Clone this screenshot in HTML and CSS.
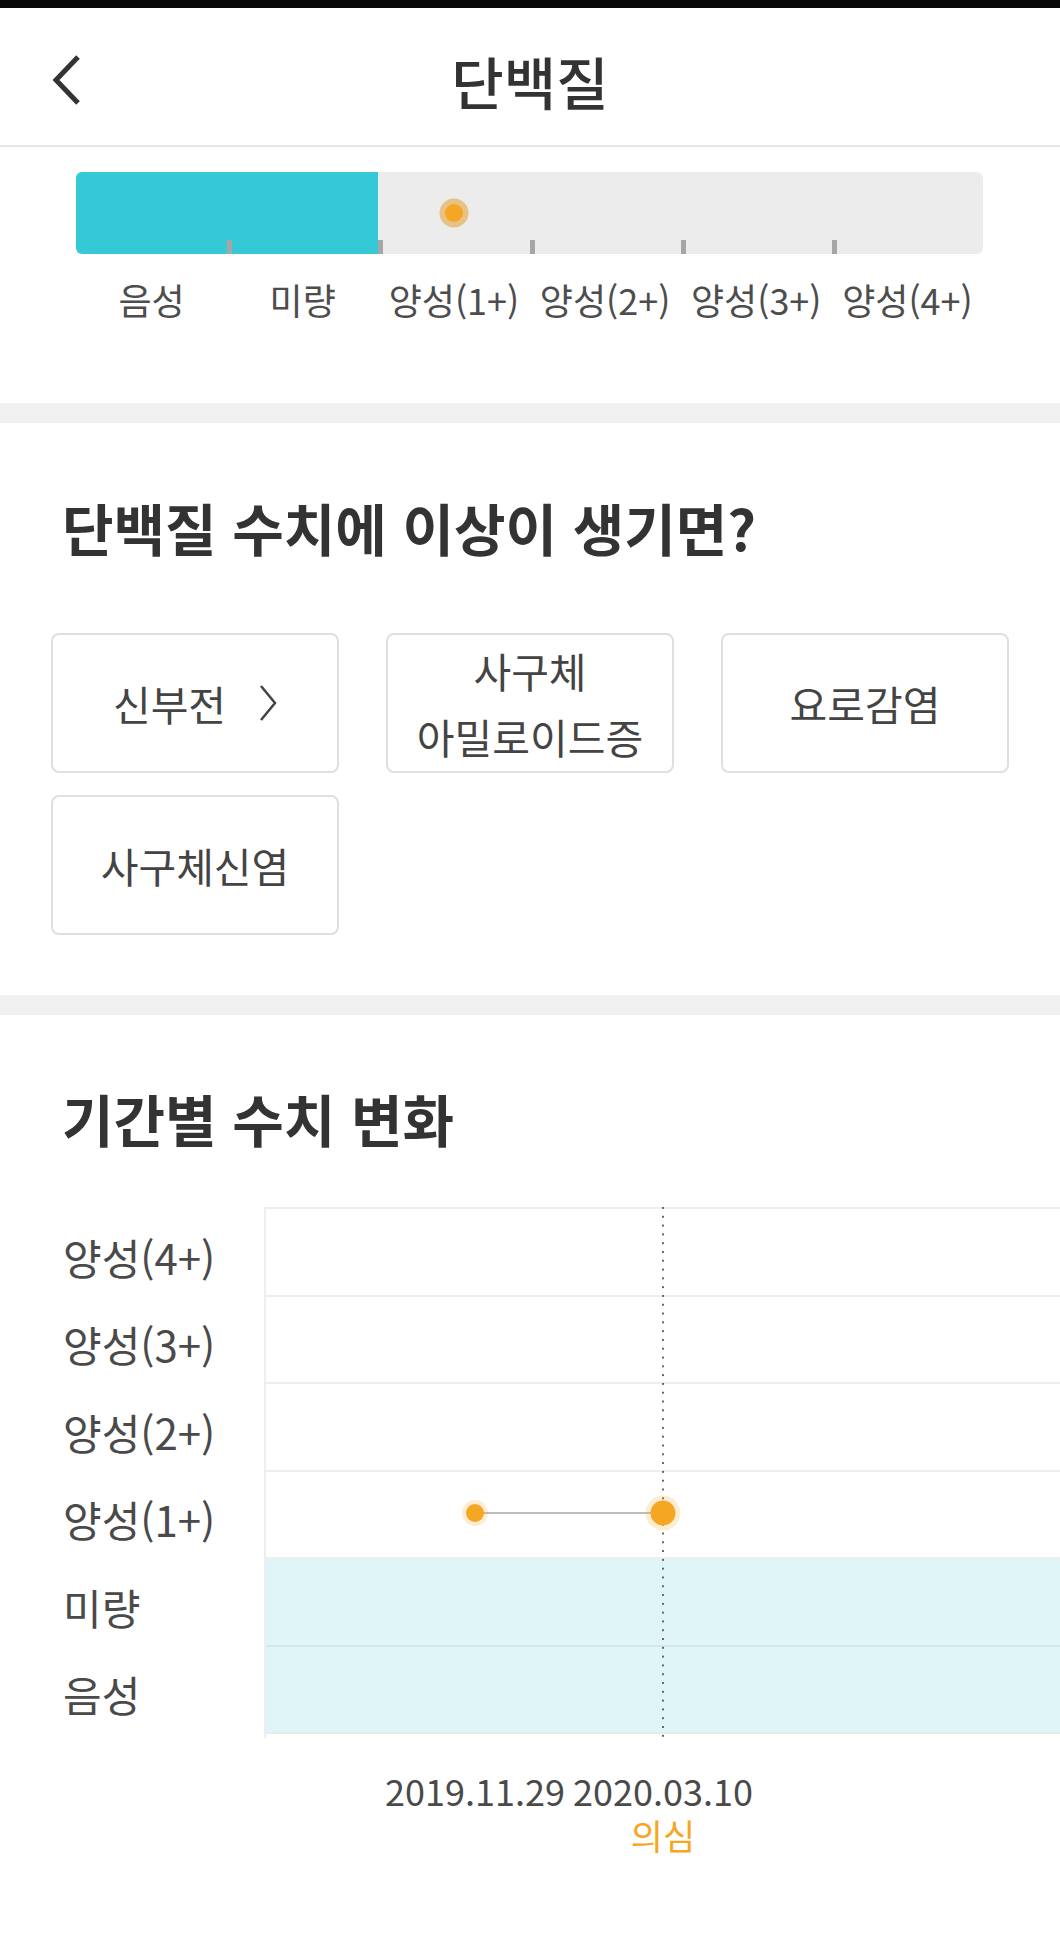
FILE: index.html
```html
<!DOCTYPE html>
<html lang="ko">
<head>
    <meta charset="UTF-8">
    <meta name="viewport" content="width=device-width, initial-scale=1.0">
    <title>단백질</title>
    <link rel="stylesheet" href="styles.css">
</head>
<body>

<div class="status-bar"></div>

<header class="top-bar">
    <button class="back" type="button" aria-label="뒤로">
        <svg width="30" height="50" viewBox="0 0 30 50">
            <polyline points="27,2 5,25 27,48" fill="none" stroke="#333" stroke-width="5"/>
        </svg>
    </button>
    <h1>단백질</h1>
    <span></span>
</header>

<section class="panel level">
    <div class="gauge">
        <div class="seg on"></div>
        <div class="seg on"></div>
        <div class="seg"><span class="marker"></span></div>
        <div class="seg"></div>
        <div class="seg"></div>
        <div class="seg"></div>
    </div>
    <div class="gauge-labels">
        <span>음성</span>
        <span>미량</span>
        <span>양성(1+)</span>
        <span>양성(2+)</span>
        <span>양성(3+)</span>
        <span>양성(4+)</span>
    </div>
</section>

<section class="panel causes">
    <h2>단백질 수치에 이상이 생기면?</h2>
    <div class="cause-list">
        <a class="cause" href="#">신부전
            <svg class="more" width="18" height="36" viewBox="0 0 18 36">
                <polyline points="2,1 16,18 2,35" fill="none" stroke="#444" stroke-width="2.5"/>
            </svg>
        </a>
        <a class="cause" href="#">사구체<br>아밀로이드증</a>
        <a class="cause" href="#">요로감염</a>
        <a class="cause" href="#">사구체신염</a>
    </div>
</section>

<section class="trend">
    <h2>기간별 수치 변화</h2>
    <div class="chart">
        <div class="y-axis">
            <span>양성(4+)</span>
            <span>양성(3+)</span>
            <span>양성(2+)</span>
            <span>양성(1+)</span>
            <span>미량</span>
            <span>음성</span>
        </div>
        <div class="plot">
            <div class="band"></div>
            <div class="band"></div>
            <div class="band"></div>
            <div class="band"></div>
            <div class="band normal"></div>
            <div class="band normal last"></div>

            <div class="guide" style="left: 396px;"></div>
            <div class="link" style="left: 209px; width: 188px; top: 304px;"></div>
            <span class="point" style="left: 209px; top: 304px;"></span>
            <span class="point current" style="left: 397px; top: 304px;"></span>
        </div>
    </div>
    <div class="x-axis">
        <div class="tick" style="left: 209px;">
            <span class="date">2019.11.29</span>
        </div>
        <div class="tick" style="left: 397px;">
            <span class="date">2020.03.10</span>
            <span class="status">의심</span>
        </div>
    </div>
</section>

</body>
</html>
```

FILE: styles.css
```css
* {
    box-sizing: border-box;
}
html, body {
    margin: 0;
}
body {
    width: 1060px;
    min-height: 1946px;
    font-family: "Noto Sans CJK KR", "Noto Sans", sans-serif;
    color: #4a4a4a;
    background-color: #fff;
}
.status-bar {
    height: 8px;
    background-color: #080808;
}

/* header */
.top-bar {
    display: grid;
    grid-template-columns: 1fr auto 1fr;
    align-items: center;
    height: 139px;
    padding-top: 6px;
    border-bottom: 2px solid #e6e6e6;
}
.back {
    justify-self: start;
    padding: 0 0 0 51px;
    border: none;
    background: none;
    cursor: pointer;
}
.back svg {
    display: block;
}
.top-bar h1 {
    margin: 0;
    font-size: 57px;
    font-weight: 500;
    line-height: 64px;
    color: #333;
}

.panel {
    border-bottom: 20px solid #f0f0f0;
}

/* level gauge */
.level {
    height: 276px;
    padding: 25px 77px 0 76px;
}
.gauge {
    display: grid;
    grid-template-columns: repeat(6, 1fr);
    height: 82px;
    background-color: #ececec;
    border-radius: 6px;
    overflow: hidden;
}
.seg {
    position: relative;
    display: flex;
    align-items: center;
    justify-content: center;
}
.seg.on {
    background-color: #35c9d8;
}
.seg + .seg::before {
    content: "";
    position: absolute;
    left: 0;
    bottom: 0;
    width: 5px;
    height: 14px;
    background-color: #a6a6a6;
}
.marker {
    width: 18px;
    height: 18px;
    border-radius: 50%;
    background-color: #f5a623;
    box-shadow: 0 0 0 5.5px rgba(226, 160, 52, 0.55);
}
.gauge-labels {
    display: grid;
    grid-template-columns: repeat(6, 1fr);
    margin-top: 24px;
    font-size: 36px;
    line-height: 42px;
    text-align: center;
    white-space: nowrap;
    color: #4d4d4d;
}

/* section titles */
.causes h2, .trend h2 {
    margin: 0 0 0 62px;
    font-size: 56px;
    font-weight: 700;
    line-height: 60px;
    color: #333;
}

/* related diseases */
.causes {
    height: 592px;
    padding-top: 74px;
}
.cause-list {
    display: grid;
    grid-template-columns: repeat(3, 288px);
    grid-auto-rows: 140px;
    gap: 22px 47px;
    margin: 76px 0 0 51px;
}
.cause {
    display: flex;
    align-items: center;
    justify-content: center;
    border: 2px solid #dfdfdf;
    border-radius: 8px;
    font-size: 41px;
    line-height: 66px;
    text-align: center;
    color: #444;
    text-decoration: none;
}
.cause .more {
    margin-left: 33px;
}

/* trend chart */
.trend {
    padding-top: 73px;
}
.chart {
    display: grid;
    grid-template-columns: 201px 1fr;
    margin: 59px 0 0 63px;
}
.y-axis {
    display: grid;
    grid-template-rows: repeat(6, 87.5px);
    align-items: center;
    padding-top: 6px;
    font-size: 42px;
    line-height: 48px;
    white-space: nowrap;
    color: #4a4a4a;
}
.plot {
    position: relative;
    border-top: 2px solid #eee;
    border-left: 2px solid #eee;
}
.band {
    height: 87.5px;
    border-bottom: 2px solid #eee;
}
.band.normal {
    background-color: #e0f5f8;
    border-bottom-color: #d4e7eb;
}
.band.last {
    border-bottom-color: #e3eeef;
}
.guide {
    position: absolute;
    top: -2px;
    bottom: 0;
    width: 2px;
    background-image: linear-gradient(#666 2px, transparent 2px);
    background-size: 2px 8.8px;
}
.link {
    position: absolute;
    height: 2px;
    margin-top: -1px;
    background-color: #bdbdbd;
}
.point {
    position: absolute;
    width: 18px;
    height: 18px;
    border-radius: 50%;
    background-color: #f5a623;
    box-shadow: 0 0 0 4px rgba(245, 166, 35, 0.2);
    transform: translate(-50%, -50%);
}
.point.current {
    width: 25px;
    height: 25px;
    box-shadow: 0 0 0 5px rgba(245, 166, 35, 0.2);
}
.x-axis {
    position: relative;
    margin: 30px 0 0 266px;
}
.tick {
    position: absolute;
    top: 0;
    display: flex;
    flex-direction: column;
    align-items: center;
    transform: translateX(-50%);
    white-space: nowrap;
}
.date {
    font-size: 36px;
    line-height: 44px;
    color: #4a4a4a;
}
.status {
    font-size: 35px;
    line-height: 46px;
    color: #f5a623;
}
```
